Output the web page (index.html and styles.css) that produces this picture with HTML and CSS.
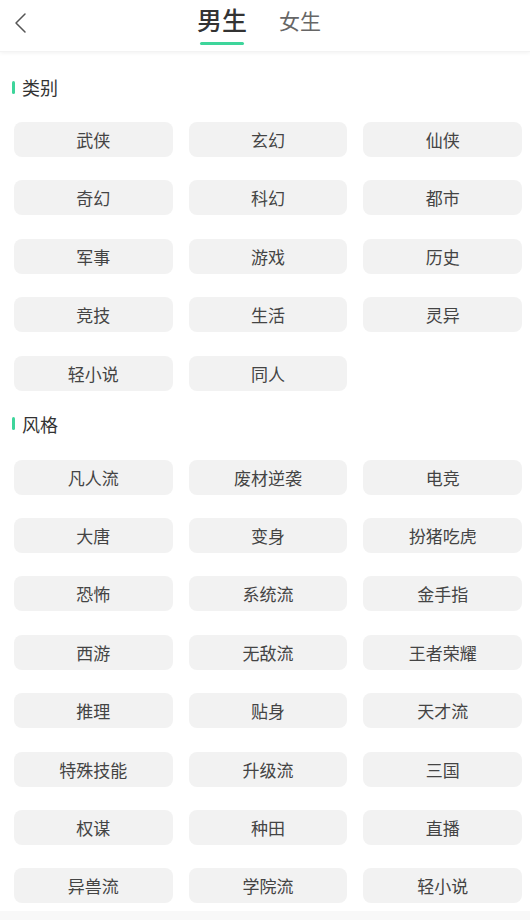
FILE: index.html
```html
<!DOCTYPE html>
<html lang="zh">
<head>
<meta charset="utf-8">
<title>分类</title>
<link rel="stylesheet" href="styles.css">
</head>
<body>
<div class="page">
  <header class="topbar">
    <button class="back" aria-label="返回">
      <svg width="14" height="22" viewBox="0 0 14 22"><path d="M12 2 L3 11 L12 20" fill="none" stroke="#555" stroke-width="1.5" stroke-linecap="round" stroke-linejoin="round"/></svg>
    </button>
    <nav class="tabs">
      <span class="tab active">男生</span>
      <span class="tab">女生</span>
    </nav>
  </header>

  <section class="section">
    <h2 class="title">类别</h2>
    <div class="grid">
      <span class="tag">武侠</span><span class="tag">玄幻</span><span class="tag">仙侠</span>
      <span class="tag">奇幻</span><span class="tag">科幻</span><span class="tag">都市</span>
      <span class="tag">军事</span><span class="tag">游戏</span><span class="tag">历史</span>
      <span class="tag">竞技</span><span class="tag">生活</span><span class="tag">灵异</span>
      <span class="tag">轻小说</span><span class="tag">同人</span>
    </div>
  </section>

  <section class="section">
    <h2 class="title">风格</h2>
    <div class="grid">
      <span class="tag">凡人流</span><span class="tag">废材逆袭</span><span class="tag">电竞</span>
      <span class="tag">大唐</span><span class="tag">变身</span><span class="tag">扮猪吃虎</span>
      <span class="tag">恐怖</span><span class="tag">系统流</span><span class="tag">金手指</span>
      <span class="tag">西游</span><span class="tag">无敌流</span><span class="tag">王者荣耀</span>
      <span class="tag">推理</span><span class="tag">贴身</span><span class="tag">天才流</span>
      <span class="tag">特殊技能</span><span class="tag">升级流</span><span class="tag">三国</span>
      <span class="tag">权谋</span><span class="tag">种田</span><span class="tag">直播</span>
      <span class="tag">异兽流</span><span class="tag">学院流</span><span class="tag">轻小说</span>
    </div>
  </section>
  <div class="footer"></div>
</div>
</body>
</html>
```

FILE: styles.css
```css
* { box-sizing: border-box; }
html, body {
  margin: 0;
  padding: 0;
  background: #ffffff;
  font-family: "Noto Sans CJK SC", "Noto Sans", sans-serif;
  color: #333;
}
.page {
  width: 530px;
  min-height: 920px;
  display: flex;
  flex-direction: column;
}
.topbar {
  position: relative;
  height: 52px;
  display: flex;
  align-items: center;
  justify-content: center;
  box-shadow: 0 1px 4px rgba(0, 0, 0, 0.06);
  border-bottom: 1px solid #f3f3f3;
}
.back {
  position: absolute;
  left: 13px;
  top: 12px;
  padding: 0;
  border: 0;
  background: none;
  display: flex;
}
.tabs {
  display: flex;
  align-items: flex-start;
  gap: 32px;
  margin-left: -12px;
  height: 52px;
  padding-top: 4px;
}
.tab {
  font-size: 21px;
  line-height: 30px;
  color: #666;
  position: relative;
  margin-top: 1px;
}
.tab.active {
  font-size: 25px;
  line-height: 32px;
  color: #333;
  font-weight: 500;
  margin-top: -1px;
}
.tab.active::after {
  content: "";
  position: absolute;
  left: 3px;
  right: 3px;
  top: 39px;
  height: 3px;
  border-radius: 2px;
  background: #3ed59b;
}
.section {
  padding: 0 8px 0 14px;
}
.title {
  margin: 23px 0 23px -2px;
  font-size: 18px;
  font-weight: 400;
  line-height: 24px;
  color: #333;
  display: flex;
  align-items: center;
  gap: 7px;
}
.section + .section .title {
  margin-top: 21px;
  margin-bottom: 24px;
}
.title::before {
  content: "";
  width: 3px;
  height: 13px;
  border-radius: 2px;
  background: #3ed59b;
}
.grid {
  display: grid;
  grid-template-columns: repeat(3, 1fr);
  column-gap: 16px;
  row-gap: 23.4px;
}
.tag {
  height: 35px;
  background: #f2f2f2;
  border-radius: 8px;
  display: flex;
  align-items: center;
  justify-content: center;
  font-size: 17px;
  color: #444;
}
.footer {
  margin-top: 8px;
  flex: 1;
  background: #f8f8f8;
}
```
